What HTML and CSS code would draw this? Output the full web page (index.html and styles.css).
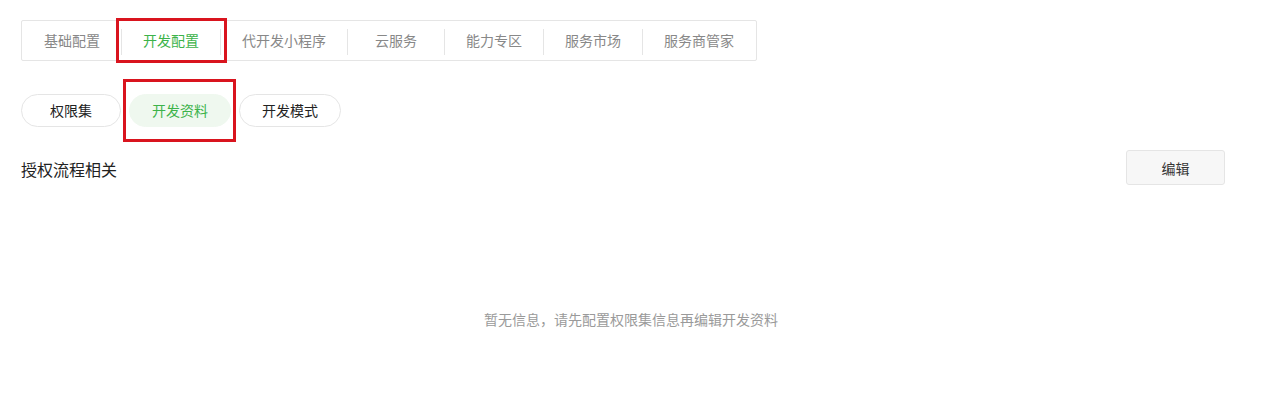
FILE: index.html
```html
<!DOCTYPE html>
<html lang="zh-CN">
<head>
    <meta charset="UTF-8">
    <meta name="viewport" content="width=device-width, initial-scale=1.0">
    <title>开发配置</title>
    <link rel="stylesheet" href="styles.css">
</head>
<body>
    <div class="page">
        <div class="tabs">
            <a class="tab">基础配置</a>
            <a class="tab active">开发配置</a>
            <a class="tab">代开发小程序</a>
            <a class="tab">云服务</a>
            <a class="tab">能力专区</a>
            <a class="tab">服务市场</a>
            <a class="tab">服务商管家</a>
        </div>

        <div class="pills">
            <a class="pill">权限集</a>
            <a class="pill active">开发资料</a>
            <a class="pill">开发模式</a>
        </div>

        <div class="section-head">
            <h2 class="section-title">授权流程相关</h2>
            <button class="btn">编辑</button>
        </div>

        <p class="empty">暂无信息，请先配置权限集信息再编辑开发资料</p>
    </div>

    <!-- 标注框 -->
    <div class="mark mark-tab"></div>
    <div class="mark mark-pill"></div>
</body>
</html>
```

FILE: styles.css
```css
body {
    margin: 0;
    background: #fff;
    font-family: "Noto Sans CJK SC", "Noto Sans", sans-serif;
    color: #353535;
}
.page {
    padding: 20px 37px 0 21px;
}
.tabs {
    display: inline-flex;
    border: 1px solid #e5e5e5;
    border-radius: 2px;
    height: 39px;
}
.tab {
    position: relative;
    min-width: 54px;
    padding: 0 21px;
    line-height: 39px;
    font-size: 14px;
    color: #888;
    text-align: center;
    cursor: pointer;
}
.tab:first-child {
    padding-left: 22px;
}
.tab:last-child {
    padding-right: 22px;
}
.tab + .tab {
    margin-left: 1px;
}
.tab + .tab::before {
    content: "";
    position: absolute;
    left: -1px;
    top: 8px;
    width: 1px;
    height: 26px;
    background: #e5e5e5;
}
.tab.active {
    color: #3cb34a;
}
.pills {
    display: flex;
    gap: 8px;
    margin-top: 33px;
}
.pill {
    min-width: 54px;
    padding: 0 22px;
    height: 31px;
    line-height: 31px;
    border: 1px solid #e5e5e5;
    border-radius: 17px;
    font-size: 14px;
    color: #222;
    text-align: center;
    cursor: pointer;
}
.pill.active {
    background: #eff8ef;
    border-color: #eff8ef;
    color: #3cb34a;
}
.section-head {
    display: flex;
    align-items: center;
    justify-content: space-between;
    margin-top: 23px;
}
.section-title {
    margin: 0;
    font-size: 16px;
    font-weight: normal;
    color: #222;
    padding-top: 3px;
}
.btn {
    width: 99px;
    height: 35px;
    margin-right: 16px;
    background: #f7f7f7;
    border: 1px solid #e5e5e5;
    border-radius: 3px;
    font-family: inherit;
    font-size: 14px;
    color: #353535;
    cursor: pointer;
}
.empty {
    margin: 124px 0 0;
    text-align: center;
    font-size: 14px;
    color: #9a9a9a;
}
.mark {
    position: absolute;
    border: 3px solid #d9141e;
    box-sizing: border-box;
}
.mark-tab {
    left: 116px;
    top: 18px;
    width: 111px;
    height: 45px;
}
.mark-pill {
    left: 123px;
    top: 79px;
    width: 113px;
    height: 63px;
}
```
